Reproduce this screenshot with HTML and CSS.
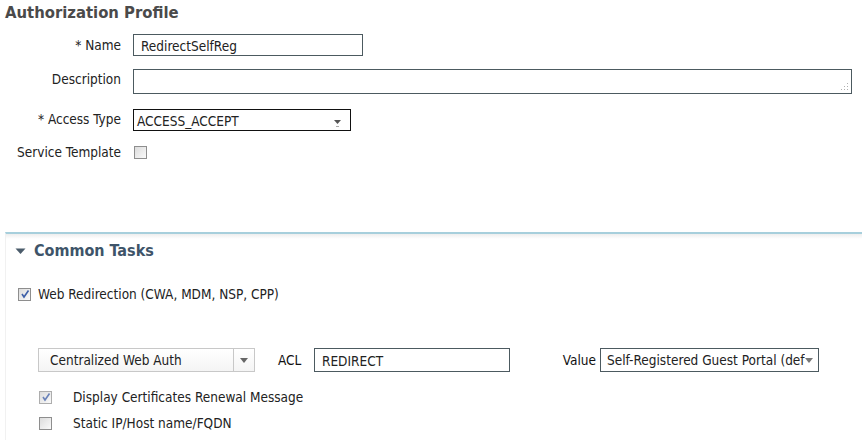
FILE: index.html
```html
<!DOCTYPE html>
<html lang="en">
<head>
    <meta charset="UTF-8">
    <title>Authorization Profile</title>
    <link rel="stylesheet" href="styles.css">
</head>
<body>
    <div class="page">
        <h1 class="title">Authorization Profile</h1>

        <div class="profile-form">
            <label class="label">* Name</label>
            <div class="field"><input class="text name-input" type="text" value="RedirectSelfReg"></div>

            <label class="label label-top">Description</label>
            <div class="field">
                <div class="textarea">
                    <svg class="grip" width="8" height="8" viewBox="0 0 8 8">
                        <rect x="6" y="0" width="1" height="1" fill="#b0b0b0"/>
                        <rect x="3" y="3" width="1" height="1" fill="#b0b0b0"/>
                        <rect x="6" y="3" width="1" height="1" fill="#b0b0b0"/>
                        <rect x="0" y="6" width="1" height="1" fill="#b0b0b0"/>
                        <rect x="3" y="6" width="1" height="1" fill="#b0b0b0"/>
                        <rect x="6" y="6" width="1" height="1" fill="#b0b0b0"/>
                    </svg>
                </div>
            </div>

            <label class="label">* Access Type</label>
            <div class="field">
                <div class="select access-select">
                    <span class="select-text">ACCESS_ACCEPT</span>
                    <svg class="arrow" width="9" height="9" viewBox="0 0 9 9">
                        <path d="M1 2 L8 2 L4.5 6 Z" fill="#555"/>
                        <rect x="3" y="8" width="3" height="1" fill="#aaa"/>
                    </svg>
                </div>
            </div>

            <label class="label">Service Template</label>
            <div class="field"><span class="check"></span></div>
        </div>

        <div class="tasks">
            <div class="tasks-head">
                <svg class="toggle" width="11" height="7" viewBox="0 0 11 7">
                    <path d="M0.5 0.5 L10.5 0.5 L5.5 6 Z" fill="#4b5c6b"/>
                </svg>
                <h2 class="tasks-title">Common Tasks</h2>
            </div>

            <div class="check-row web-row">
                <span class="check checked">
                    <svg width="10" height="10" viewBox="0 0 10 10"><path d="M2 5 L4 8 L8.5 1.5" stroke="#3d5fa8" stroke-width="1.6" fill="none"/></svg>
                </span>
                <span>Web Redirection (CWA, MDM, NSP, CPP)</span>
            </div>

            <div class="redirect">
                <div class="redirect-row">
                    <div class="select light-select auth-select">
                        <span class="select-text">Centralized Web Auth</span>
                        <span class="select-btn">
                            <svg width="8" height="5" viewBox="0 0 8 5"><path d="M0 0 L8 0 L4 5 Z" fill="#666"/></svg>
                        </span>
                    </div>
                    <span class="inline-label acl-label">ACL</span>
                    <input class="text acl-input" type="text" value="REDIRECT">
                    <span class="inline-label value-label">Value</span>
                    <div class="select value-select">
                        <span class="select-text">Self-Registered Guest Portal (def</span>
                        <svg width="8" height="5" viewBox="0 0 8 5"><path d="M0 0 L8 0 L4 5 Z" fill="#777"/></svg>
                    </div>
                </div>

                <div class="check-row sub-row">
                    <span class="check checked faded">
                        <svg width="10" height="10" viewBox="0 0 10 10"><path d="M2 5 L4 8 L8.5 1.5" stroke="#6a82b8" stroke-width="1.6" fill="none"/></svg>
                    </span>
                    <span>Display Certificates Renewal Message</span>
                </div>
                <div class="check-row sub-row">
                    <span class="check"></span>
                    <span>Static IP/Host name/FQDN</span>
                </div>
            </div>
        </div>
    </div>
</body>
</html>
```

FILE: styles.css
```css
* {
    box-sizing: border-box;
}

body {
    margin: 0;
    background: #fff;
    font-family: "DejaVu Sans Condensed", "DejaVu Sans", sans-serif;
    font-size: 13.5px;
    color: #222;
}

.page {
    padding-left: 5px;
}

.title {
    margin: 0;
    height: 34px;
    padding-top: 3px;
    font-size: 16.5px;
    font-weight: bold;
    color: #4a4a4a;
}

/* top form */
.profile-form {
    display: grid;
    grid-template-columns: 116px 1fr;
    column-gap: 12px;
    row-gap: 13px;
    align-items: center;
    padding-right: 10px;
}

.label {
    text-align: right;
    color: #222;
}

.label-top {
    align-self: start;
    padding-top: 2px;
}

.text {
    display: block;
    height: 22px;
    border: 1px solid #4c5a60;
    padding: 2px 7px 0;
    font-family: inherit;
    font-size: 13.5px;
    color: #222;
    background: #fff;
    outline: none;
}

.name-input {
    width: 230px;
}

.textarea {
    position: relative;
    height: 25px;
    border: 1px solid #4c5a60;
    background: #fff;
}

.grip {
    position: absolute;
    right: 2px;
    bottom: 2px;
}

.select {
    display: flex;
    align-items: center;
    justify-content: space-between;
    background: #fff;
}

.access-select {
    width: 218px;
    height: 22px;
    margin-top: 2px;
    border: 1px solid #111;
    padding: 1px 8px 0 3px;
}

.access-select .arrow {
    margin-top: 4px;
}

.check {
    display: inline-flex;
    align-items: center;
    justify-content: center;
    flex: none;
    width: 13px;
    height: 13px;
    border: 1px solid #8e8e8e;
    background: linear-gradient(135deg, #dcdcdc, #fafafa);
    vertical-align: middle;
}

.profile-form .check {
    display: flex;
    margin: 0 0 0 1px;
}

/* common tasks */
.tasks {
    margin-top: 72px;
    border-top: 2px solid #a7cfdc;
    border-left: 1px solid #f1f1f1;
    background: linear-gradient(#eeeeee, #fff 5px);
    min-height: 220px;
}

.tasks-head {
    display: flex;
    align-items: center;
    height: 32px;
    padding-left: 9px;
}

.toggle {
    margin-right: 8px;
    margin-top: 2px;
}

.tasks-title {
    margin: 0;
    font-size: 16px;
    font-weight: bold;
    color: #3e5469;
}

.check-row {
    display: flex;
    align-items: center;
}

.web-row {
    margin-top: 20px;
    padding-left: 12px;
}

.web-row .check {
    margin-right: 7px;
}

.redirect {
    padding-left: 32px;
    padding-top: 46px;
}

.redirect-row {
    display: flex;
    align-items: center;
    height: 24px;
}

.light-select {
    height: 24px;
    border: 1px solid #c8c8c8;
    background: linear-gradient(#fff, #f4f4f4);
}

.auth-select {
    width: 217px;
    padding-left: 11px;
}

.select-btn {
    display: flex;
    align-items: center;
    justify-content: center;
    width: 21px;
    height: 100%;
    border-left: 1px solid #c8c8c8;
}

.inline-label {
    color: #111;
}

.acl-label {
    width: 59px;
    padding-left: 23px;
}

.acl-input {
    width: 196px;
    height: 24px;
}

.value-label {
    width: 90px;
    text-align: right;
    padding-right: 4px;
}

.value-select {
    width: 219px;
    height: 24px;
    border: 1px solid #4c5a60;
    padding: 0 5px 0 6px;
    overflow: hidden;
    white-space: nowrap;
}

.value-select .select-text {
    overflow: hidden;
}

.sub-row {
    margin-top: 17px;
    padding-left: 1px;
}

.sub-row + .sub-row {
    margin-top: 10px;
}

.sub-row .check {
    margin-right: 21px;
}

.faded {
    border-color: #adadad;
}
```
